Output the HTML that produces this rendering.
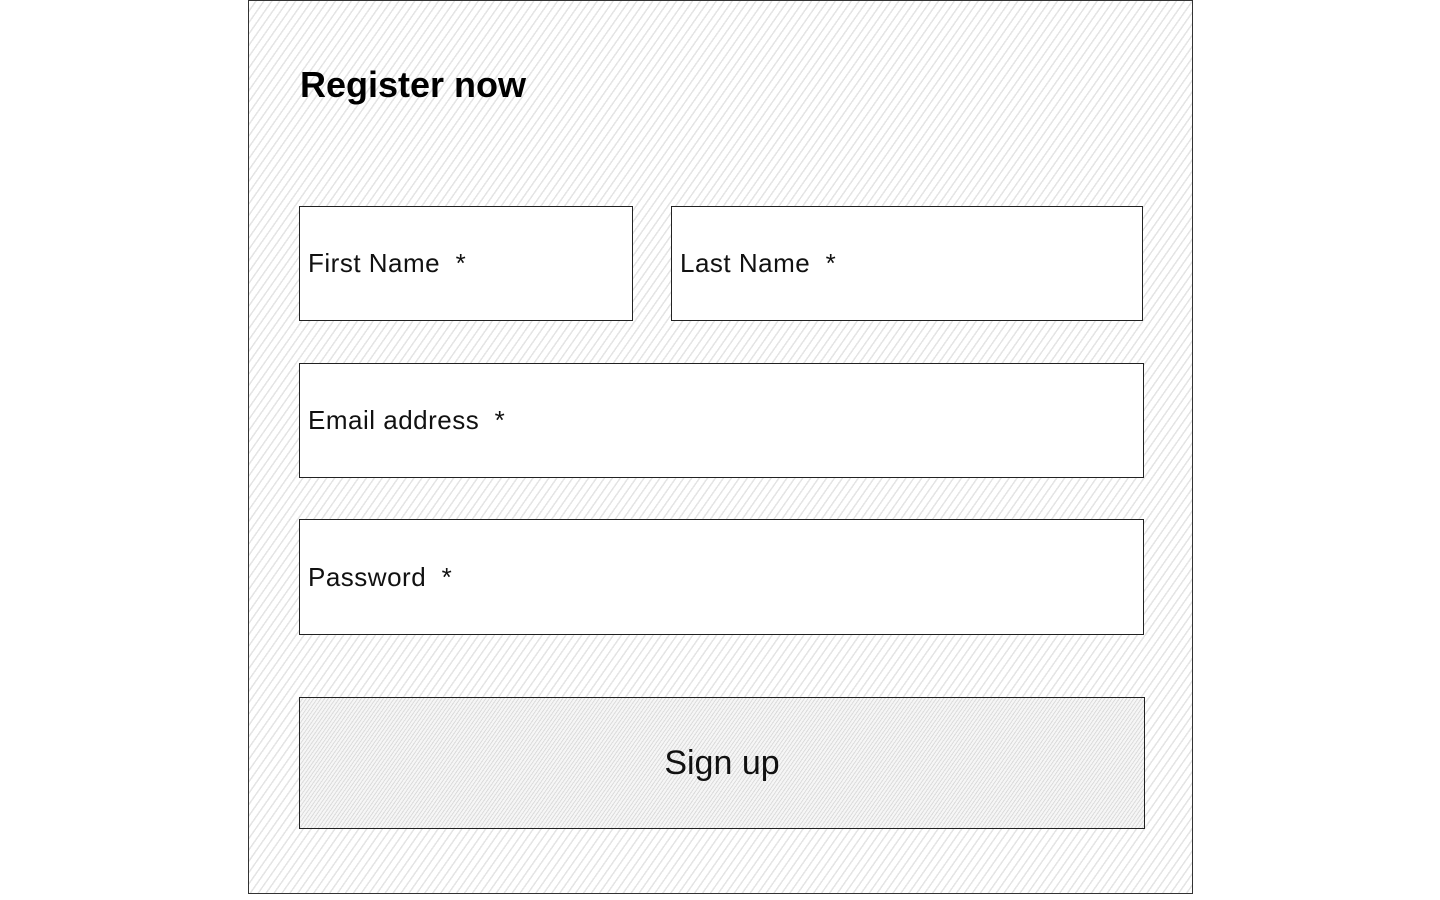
<!DOCTYPE html>
<html><head><style>
html,body{margin:0;width:1440px;height:900px;background:#fff;overflow:hidden;font-family:"Comic Sans MS","Liberation Sans",sans-serif}
.panel{position:absolute;left:248px;top:0;width:943px;height:892px;border:1.5px solid #333;
background:repeating-linear-gradient(125deg,#fff 0 5px,#e4e4e4 5px 6.5px)}
.f{position:absolute;background:#fff;border:1.5px solid #222;box-sizing:border-box;font-size:26px;color:#111;display:flex;align-items:center;padding-left:8px;letter-spacing:0.5px}
h1{position:absolute;left:300px;top:64px;margin:0;font-size:36px;font-weight:bold;color:#000;font-family:"Comic Sans MS","Liberation Sans",sans-serif}
.btn{position:absolute;left:299px;top:697px;width:846px;height:132px;box-sizing:border-box;border:1.5px solid #222;
background:repeating-linear-gradient(125deg,#f6f6f6 0 2px,#dcdcdc 2px 3px);display:flex;align-items:center;justify-content:center;font-size:34px;color:#111}
</style></head><body>
<div class="panel"></div>
<h1>Register now</h1>
<div class="f" style="left:299px;top:206px;width:334px;height:115px">First Name &nbsp;*</div>
<div class="f" style="left:671px;top:206px;width:472px;height:115px">Last Name &nbsp;*</div>
<div class="f" style="left:299px;top:363px;width:845px;height:115px">Email address &nbsp;*</div>
<div class="f" style="left:299px;top:519px;width:845px;height:116px">Password &nbsp;*</div>
<div class="btn">Sign up</div>
</body></html>
